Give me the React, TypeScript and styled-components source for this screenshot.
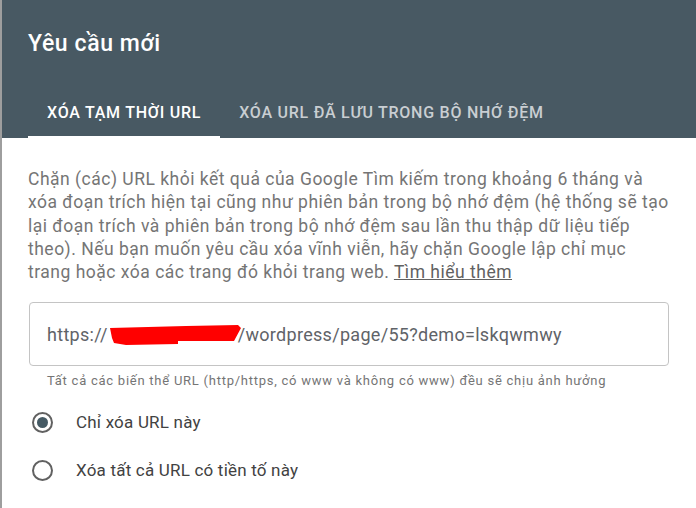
import styled, { createGlobalStyle } from 'styled-components';

let Global = createGlobalStyle`
  html, body {
    margin: 0;
    padding: 0;
    background: #ffffff;
  }
  body {
    font-family: Roboto, "Noto Sans", "Liberation Sans", sans-serif;
  }
`;

let Frame = styled.div`
  width: 696px;
  height: 508px;
  overflow: hidden;
  box-sizing: border-box;
  border-left: 2px solid rgba(0, 0, 0, 0.38);
  background: #ffffff;
`;

let Header = styled.div`
  background: #485963;
  padding: 28px 0 0 26px;
`;

let Title = styled.div`
  color: #ffffff;
  font-size: 23px;
  font-weight: 500;
  letter-spacing: 0.6px;
  line-height: 32px;
  margin-bottom: 26px;
`;

let Tabs = styled.div`
  display: flex;
`;

let Tab = styled.div<{ active?: boolean }>`
  height: 52px;
  box-sizing: border-box;
  display: flex;
  align-items: center;
  padding: 2px 19px 0 19px;
  font-size: 16px;
  font-weight: 500;
  letter-spacing: 0.75px;
  text-transform: uppercase;
  color: ${p => (p.active ? '#ffffff' : '#c9ced2')};
  border-bottom: 2px solid ${p => (p.active ? '#ffffff' : 'transparent')};
`;

let Body = styled.div`
  padding: 30px 26px 0 26px;
`;

let Intro = styled.p`
  margin: 0;
  width: 645px;
  font-size: 17.5px;
  letter-spacing: 0.5px;
  line-height: 23.3px;
  color: #757575;

  a {
    color: #616161;
    text-decoration: underline;
  }
`;

let UrlBox = styled.div`
  margin-top: 18px;
  margin-left: 1px;
  width: 640px;
  height: 64px;
  box-sizing: border-box;
  border: 1px solid #c4c4c4;
  border-radius: 4px;
  display: flex;
  align-items: center;
  padding: 0 17px;
  font-size: 18px;
  letter-spacing: 0.3px;
  color: #5f6368;
`;

let Redacted = styled.svg`
  width: 134px;
  height: 26px;
  margin: 2px -4px 0 0;
  flex: none;
`;

let Hint = styled.div`
  margin-top: 7px;
  padding-left: 19px;
  font-size: 13px;
  letter-spacing: 0.75px;
  line-height: 16px;
  color: #757575;
`;

let Options = styled.div`
  margin-top: 9px;
`;

let Option = styled.label`
  height: 48px;
  display: flex;
  align-items: center;
  gap: 23px;
  padding-left: 4px;
  font-size: 17px;
  letter-spacing: 0.2px;
  color: #424242;
`;

let Radio = styled.span<{ checked?: boolean }>`
  width: 21px;
  height: 21px;
  box-sizing: border-box;
  border-radius: 50%;
  border: 2px solid #616161;
  display: flex;
  align-items: center;
  justify-content: center;
  flex: none;

  &::after {
    content: '';
    width: 11px;
    height: 11px;
    border-radius: 50%;
    background: ${p => (p.checked ? '#455a64' : 'transparent')};
  }
`;

export default function App() {
  return (
    <>
      <Global />
      <Frame>
        <Header>
          <Title>Yêu cầu mới</Title>
          <Tabs>
            <Tab active>Xóa tạm thời URL</Tab>
            <Tab>Xóa URL đã lưu trong bộ nhớ đệm</Tab>
          </Tabs>
        </Header>
        <Body>
          <Intro>
            Chặn (các) URL khỏi kết quả của Google Tìm kiếm trong khoảng 6 tháng và xóa đoạn
            trích hiện tại cũng như phiên bản trong bộ nhớ đệm (hệ thống sẽ tạo lại đoạn trích và
            phiên bản trong bộ nhớ đệm sau lần thu thập dữ liệu tiếp theo). Nếu bạn muốn yêu cầu
            xóa vĩnh viễn, hãy chặn Google lập chỉ mục trang hoặc xóa các trang đó khỏi trang
            web. <a>Tìm hiểu thêm</a>
          </Intro>
          <UrlBox>
            https://
            <Redacted viewBox="0 0 134 26">
              <path
                d="M2 6 L40 5 L78 4 L130 3 L133 6 L126 19 L70 19 L70 22 L18 23 L6 21 L4 16 Z"
                fill="#ff0000"
              />
            </Redacted>
            /wordpress/page/55?demo=lskqwmwy
          </UrlBox>
          <Hint>
            Tất cả các biến thể URL (http/https, có www và không có www) đều sẽ chịu ảnh hưởng
          </Hint>
          <Options>
            <Option>
              <Radio checked />
              Chỉ xóa URL này
            </Option>
            <Option>
              <Radio />
              Xóa tất cả URL có tiền tố này
            </Option>
          </Options>
        </Body>
      </Frame>
    </>
  );
}
